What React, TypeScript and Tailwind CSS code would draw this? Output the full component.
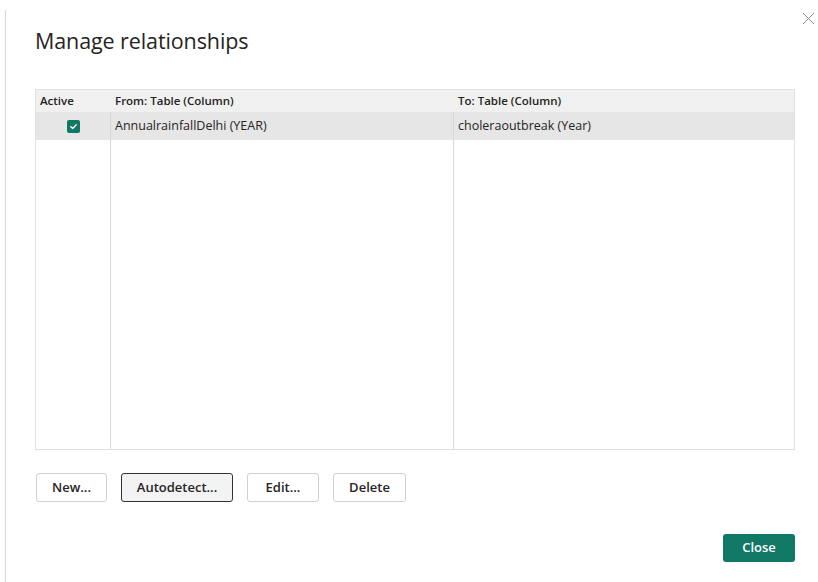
import React from "react";

const font = { fontFamily: '"Open Sans", "Noto Sans", sans-serif' };

function Check() {
  return (
    <span className="w-[13px] h-[13px] rounded-[2px] bg-[#117865] flex items-center justify-center">
      <svg width="9" height="9" viewBox="0 0 10 10" fill="none">
        <path d="M2 5.2 L4.2 7.2 L8 3" stroke="white" strokeWidth="1.5" strokeLinecap="round" strokeLinejoin="round" />
      </svg>
    </span>
  );
}

function Btn({ label, w, focused }: { label: string; w: string; focused?: boolean }) {
  return (
    <button
      className={
        "h-[29px] rounded-[3px] text-[13px] font-semibold text-[#252423] " +
        w +
        (focused ? " border border-[#333] bg-[#f3f3f3]" : " border border-[#d0d0d0] bg-white")
      }
    >
      {label}
    </button>
  );
}

export default function App() {
  return (
    <div className="w-[818px] h-[582px] bg-white relative overflow-hidden text-[#252423]" style={font}>
      <div className="absolute left-[5px] top-[10px] bottom-0 w-px bg-[#d6d6d6]" />
      <button className="absolute right-[3px] top-[12px] text-[#8a8a8a]">
        <svg width="13" height="13" viewBox="0 0 13 13">
          <path d="M1 1 L12 12 M12 1 L1 12" stroke="currentColor" strokeWidth="1" />
        </svg>
      </button>
      <div className="pl-[35px] pr-[23px] pt-[26px]">
        <h1 className="text-[21.5px] leading-[30px] font-normal tracking-[-0.1px]">Manage relationships</h1>
        <div className="mt-[33px] h-[361px] border border-[#e1e1e1] flex flex-col text-[11.5px]">
          <div className="flex h-[22px] bg-[#f0f0f0] font-semibold">
            <div className="w-[75px] pl-[4px] flex items-center">Active</div>
            <div className="w-[343px] pl-[4px] flex items-center">From: Table (Column)</div>
            <div className="flex-1 pl-[4px] flex items-center">To: Table (Column)</div>
          </div>
          <div className="flex flex-1 flex-col">
            <div className="flex h-[28px] bg-[#e6e6e6] text-[12.5px]">
              <div className="w-[75px] flex items-center justify-center border-r border-[#d8d8d8]">
                <Check />
              </div>
              <div className="w-[343px] pl-[4px] flex items-center border-r border-[#d8d8d8]">AnnualrainfallDelhi (YEAR)</div>
              <div className="flex-1 pl-[4px] flex items-center">choleraoutbreak (Year)</div>
            </div>
            <div className="flex flex-1">
              <div className="w-[75px] border-r border-[#d8d8d8]" />
              <div className="w-[343px] border-r border-[#d8d8d8]" />
              <div className="flex-1" />
            </div>
          </div>
        </div>
        <div className="mt-[23px] pl-[1px] flex gap-[14px]">
          <Btn label="New..." w="w-[71px]" />
          <Btn label="Autodetect..." w="w-[112px]" focused />
          <Btn label="Edit..." w="w-[72px]" />
          <Btn label="Delete" w="w-[73px]" />
        </div>
        <div className="mt-[32px] flex justify-end">
          <button className="w-[72px] h-[28px] rounded-[3px] bg-[#117865] text-white text-[13px] font-semibold">Close</button>
        </div>
      </div>
    </div>
  );
}
